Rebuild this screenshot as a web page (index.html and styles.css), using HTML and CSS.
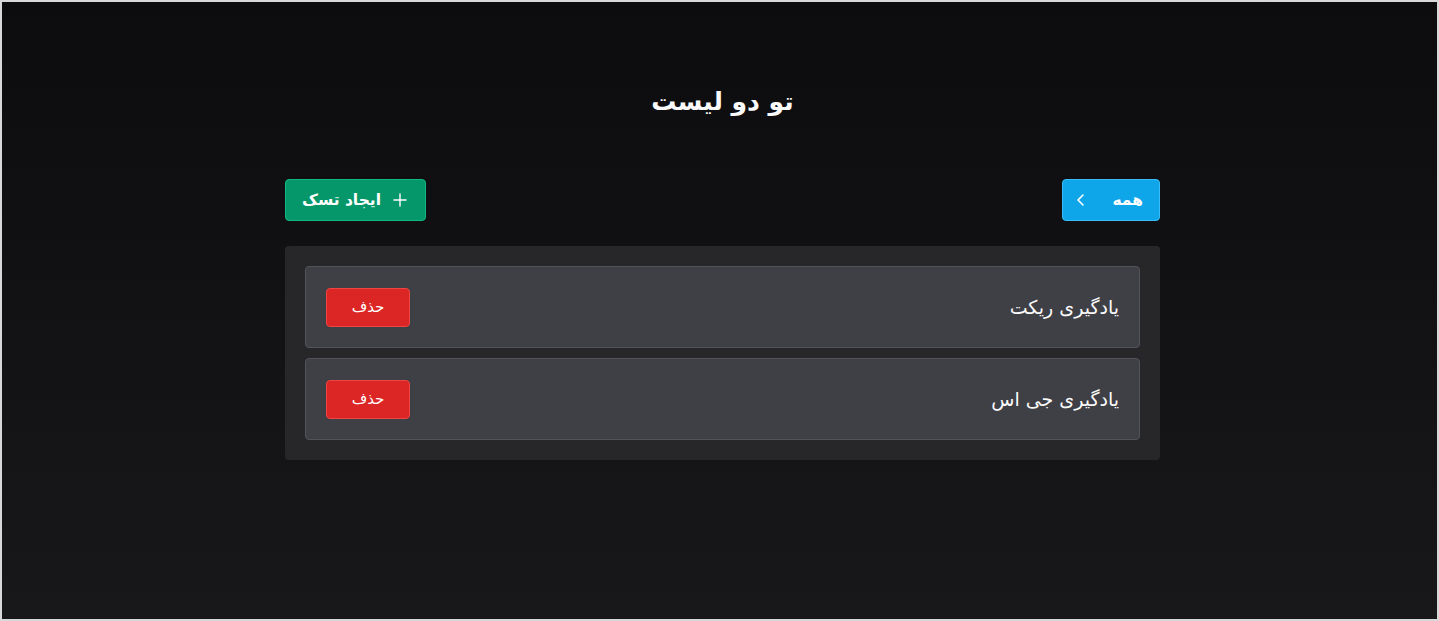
FILE: index.html
```html
<!DOCTYPE html>
<html lang="fa" dir="rtl">
<head>
<meta charset="utf-8">
<title>تو دو لیست</title>
<link rel="stylesheet" href="styles.css">
</head>
<body>
<div class="frame">
  <main class="page">
    <h1 class="title">تو دو لیست</h1>
    <div class="toolbar">
      <button class="btn btn-filter">
        <span>همه</span>
        <svg class="chev" width="14" height="14" viewBox="0 0 14 14" fill="none" stroke="currentColor" stroke-width="1.6" stroke-linecap="round" stroke-linejoin="round"><path d="M9 2 L4 7 L9 12"/></svg>
      </button>
      <button class="btn btn-create">
        <svg class="plus" width="14" height="14" viewBox="0 0 14 14" fill="none" stroke="currentColor" stroke-width="1.4" stroke-linecap="round"><path d="M7 1 V13 M1 7 H13"/></svg>
        <span>ایجاد تسک</span>
      </button>
    </div>
    <section class="list">
      <div class="item">
        <span class="item-text">یادگیری ریکت</span>
        <button class="btn-del">حذف</button>
      </div>
      <div class="item">
        <span class="item-text">یادگیری جی اس</span>
        <button class="btn-del">حذف</button>
      </div>
    </section>
  </main>
</div>
</body>
</html>
```
FILE: styles.css
```css
* { box-sizing: border-box; }
html, body { margin: 0; padding: 0; height: 100%; }
body {
  font-family: "DejaVu Sans", "Noto Sans", sans-serif;
  color: #fafafa;
  background: #d4d4d4;
}
.frame {
  height: 621px;
  border: 2px solid #d8d8d8;
  padding-left: 6px;
  background: linear-gradient(to bottom, #0c0c0f 0%, #18181b 100%);
}
.page {
  width: 875px;
  margin: 0 auto;
  padding-top: 83px;
}
.title {
  margin: 0;
  text-align: center;
  font-size: 25px;
  font-weight: 700;
  line-height: 34px;
}
.toolbar {
  display: flex;
  justify-content: space-between;
  align-items: center;
  margin-top: 60px;
}
.btn {
  display: flex;
  align-items: center;
  height: 42px;
  border-radius: 4px;
  border: 1px solid transparent;
  color: #fff;
  font-family: inherit;
  font-size: 15.5px;
  font-weight: 700;
  cursor: pointer;
}
.btn-filter {
  width: 98px;
  background: #0ea5e9;
  border-color: #38bdf8;
  padding: 0 16px 0 0;
  gap: 24px;
}
.btn-create {
  width: 141px;
  background: #059669;
  border-color: #10b981;
  padding: 0 18px 0 0;
  gap: 12px;
}
.list {
  margin-top: 25px;
  background: #27272a;
  border-radius: 4px;
  padding: 20px;
  display: flex;
  flex-direction: column;
  gap: 10px;
}
.item {
  display: flex;
  justify-content: space-between;
  align-items: center;
  height: 82px;
  padding: 0 20px;
  background: #3f3f46;
  border: 1px solid #52525b;
  border-radius: 4px;
}
.item-text {
  font-size: 19px;
}
.btn-del {
  width: 84px;
  height: 39px;
  background: #dc2626;
  border: 1px solid #ef4444;
  border-radius: 4px;
  color: #fff;
  font-family: inherit;
  font-size: 15px;
}
```
